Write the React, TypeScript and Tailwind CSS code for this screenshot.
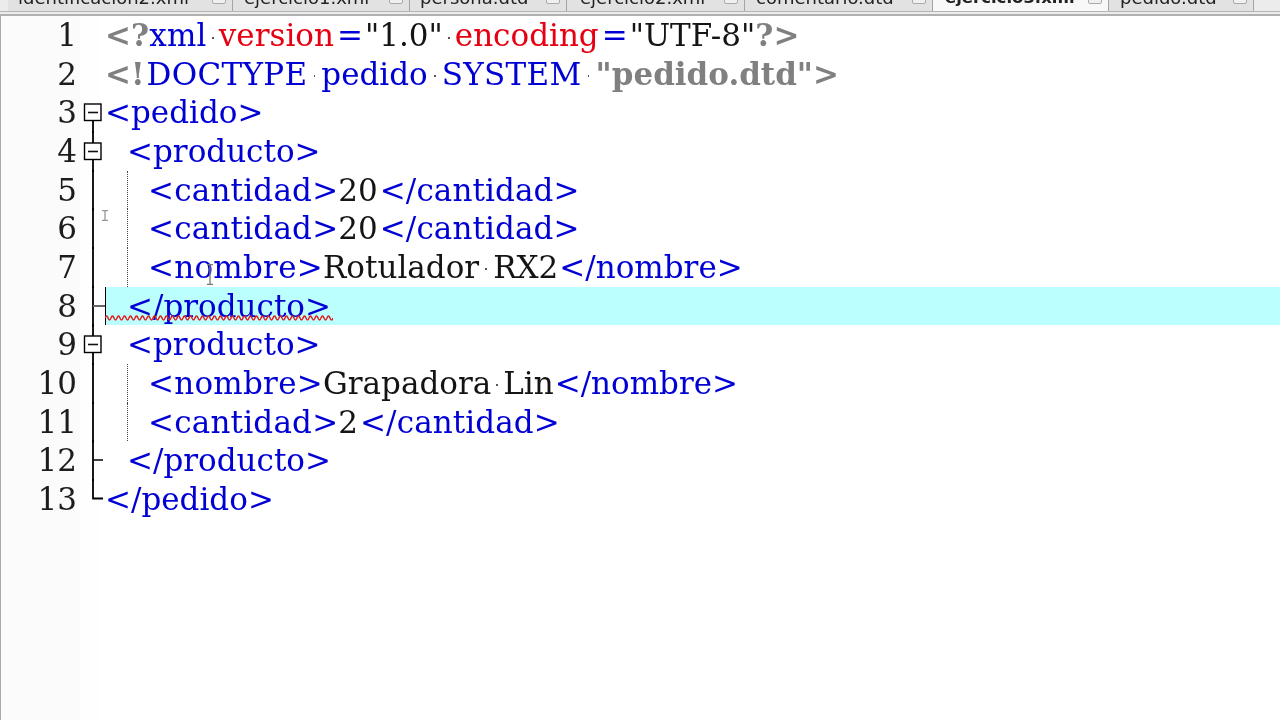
import type { ReactNode } from 'react';

const tabs = [
  { name: 'identificacion2.xml', w: 225, pl: 10 },
  { name: 'ejercicio1.xml', w: 177, pl: 11 },
  { name: 'persona.dtd', w: 157, pl: 10 },
  { name: 'ejercicio2.xml', w: 178, pl: 13 },
  { name: 'comentario.dtd', w: 188, pl: 11 },
  { name: 'ejercicio3.xml', w: 176, pl: 12, active: true },
  { name: 'pedido.dtd', w: 145, pl: 11 },
];

function Dot({ wide }: { wide?: boolean }) {
  return (
    <span className={`inline-block h-[2px] align-middle ${wide ? 'w-[14px]' : 'w-[12px]'}`}>
      <span className="mx-auto block h-[2px] w-[1.5px] bg-[#555]" />
    </span>
  );
}

type SegProps = { children: ReactNode; className?: string };

const B = ({ children, className = '' }: SegProps) => <span className={`text-[#0000d4] ${className}`}>{children}</span>;
const R = ({ children }: SegProps) => <span className="text-[#e60012]">{children}</span>;
const G = ({ children, className = '' }: SegProps) => <span className={`font-bold text-[#808080] ${className}`}>{children}</span>;
const K = ({ children, className = '' }: SegProps) => <span className={`text-[#141414] ${className}`}>{children}</span>;
const Eq = () => <span className="ml-[3px] mr-[2px] text-[#0000d4]">=</span>;

type Fold = 'none' | 'box-first' | 'box' | 'line' | 'tick' | 'tick-gray' | 'end';

function FoldMark({ type }: { type: Fold }) {
  if (type === 'none') return null;
  return (
    <svg width="20" height="39" viewBox="0 0 20 39" className="block overflow-visible">
      {type === 'end' ? (
        <path d="M8 -1V18.5H18" fill="none" stroke="#000" strokeWidth="1.8" />
      ) : (
        <path d={type === 'box-first' ? 'M8 19V40' : 'M8 -1V40'} stroke="#000" strokeWidth="1.8" />
      )}
      {type === 'tick' && <path d="M8 19H18" stroke="#111" strokeWidth="1.6" />}
      {type === 'tick-gray' && <path d="M8 19H20" stroke="#666" strokeWidth="2" />}
      {(type === 'box' || type === 'box-first') && (
        <g>
          <rect x="-0.5" y="11" width="16.5" height="16.5" fill="#fff" stroke="#000" strokeWidth="1.4" />
          <path d="M3 19.5H13" stroke="#111" strokeWidth="1.6" />
        </g>
      )}
    </svg>
  );
}

const cantidad = (n: string) => (
  <>
    <B className="tracking-[0.2px]">&lt;cantidad&gt;</B>
    <K>{n}</K>
    <B className="ml-[2px] tracking-[0.1px]">&lt;/cantidad&gt;</B>
  </>
);

const lines: { fold: Fold; indent: number; active?: boolean; code: ReactNode }[] = [
  {
    fold: 'none',
    indent: 0,
    code: (
      <>
        <G>&lt;?</G>
        <B className="tracking-[0.3px]">xml</B>
        <Dot />
        <R>version</R>
        <Eq />
        <K>"1.0"</K>
        <Dot />
        <R>encoding</R>
        <Eq />
        <K>"UTF-8"</K>
        <G>?&gt;</G>
      </>
    ),
  },
  {
    fold: 'none',
    indent: 0,
    code: (
      <>
        <G>&lt;!</G>
        <B className="ml-[2px] tracking-[0.3px]">DOCTYPE</B>
        <Dot wide />
        <B>pedido</B>
        <Dot wide />
        <B className="tracking-[0.3px]">SYSTEM</B>
        <Dot wide />
        <G>"pedido.dtd"</G>
        <G>&gt;</G>
      </>
    ),
  },
  { fold: 'box-first', indent: 0, code: <B>&lt;pedido&gt;</B> },
  { fold: 'box', indent: 1, code: <B>&lt;producto&gt;</B> },
  { fold: 'line', indent: 2, code: cantidad('20') },
  { fold: 'line', indent: 2, code: cantidad('20') },
  {
    fold: 'line',
    indent: 2,
    code: (
      <>
        <B className="tracking-[0.25px]">&lt;nombre&gt;</B>
        <K>Rotulador</K>
        <Dot wide />
        <K>RX2</K>
        <B className="ml-[1px]">&lt;/nombre&gt;</B>
      </>
    ),
  },
  { fold: 'tick-gray', indent: 1, active: true, code: <B>&lt;/producto&gt;</B> },
  { fold: 'box', indent: 1, code: <B>&lt;producto&gt;</B> },
  {
    fold: 'line',
    indent: 2,
    code: (
      <>
        <B className="tracking-[0.25px]">&lt;nombre&gt;</B>
        <K>Grapadora</K>
        <Dot />
        <K>Lin</K>
        <B className="ml-[1px]">&lt;/nombre&gt;</B>
      </>
    ),
  },
  { fold: 'line', indent: 2, code: cantidad('2') },
  { fold: 'tick', indent: 1, code: <B>&lt;/producto&gt;</B> },
  { fold: 'end', indent: 0, code: <B>&lt;/pedido&gt;</B> },
];

function IBeam({ h, color }: { h: number; color: string }) {
  return (
    <svg width="8" height={h} viewBox={`0 0 8 ${h}`} className="block">
      <path d={`M1 0.5H7M4 0.5V${h - 0.5}M1 ${h - 0.5}H7`} fill="none" stroke={color} strokeWidth="1.3" />
    </svg>
  );
}

export default function App() {
  return (
    <div className="relative flex h-[720px] w-[1280px] flex-col overflow-hidden bg-white font-['DejaVu_Serif',serif] blur-[0.35px]">
      {/* Tab bar, cut off by the crop */}
      <div className="h-[16px] shrink-0 border-b-2 border-[#b0b0b0] bg-[#ececec]">
        <div className="flex h-[12px] overflow-hidden border-b border-[#b4b4b4] pl-[8px]">
          {tabs.map((tab) => (
            <div
              key={tab.name}
              style={{ width: tab.w, paddingLeft: tab.pl }}
              className={`flex shrink-0 justify-between overflow-hidden border-r border-[#a4a4a4] pr-[6px] font-['DejaVu_Sans',sans-serif] leading-[20px] text-[#222] ${
                tab.active ? 'bg-[#f8f8f8] text-[16.5px] font-bold' : 'bg-[#e2e2e2] text-[18px]'
              }`}
            >
              <span className="-mt-[12px] whitespace-nowrap">{tab.name}</span>
              <span className="-mt-[6px] h-[10px] w-[14px] shrink-0 rounded-[2px] border border-[#aaa] bg-[#f0f0f0]" />
            </div>
          ))}
        </div>
      </div>

      {/* Editor */}
      <div className="flex flex-1 flex-col bg-[linear-gradient(to_right,#aaaaaa_1px,#fbfbfb_1px,#fbfbfb_80px,#fefefe_80px,#fefefe_100px,#ffffff_100px)]">
        {lines.map((line, i) => (
          <div
            key={i}
            className={`flex h-[38.67px] text-[31px] leading-[38px] whitespace-pre ${
              line.active ? 'bg-[linear-gradient(to_right,transparent_105px,#bcffff_105px)]' : ''
            }`}
          >
            <div className="w-[77px] shrink-0 text-right text-[#1c1c1c]">{i + 1}</div>
            <div className="w-[28px] shrink-0 pl-[8px]">
              <FoldMark type={line.fold} />
            </div>
            {line.indent === 2 ? (
              <div className="ml-[22px] h-full border-l border-dotted border-[#444] pl-[20px]">{line.code}</div>
            ) : (
              <div className={line.indent === 1 ? 'pl-[22px]' : ''}>{line.code}</div>
            )}
          </div>
        ))}
      </div>

      {/* Caret and squiggle on line 8 */}
      <div className="absolute left-[105px] top-[287px] h-[38px] w-[1px] bg-black" />
      <svg className="absolute left-[105px] top-[315px]" width="228" height="6" viewBox="0 0 228 6">
        <path
          d={'M0 3' + Array.from({ length: 76 }, (_, k) => `q1.5 ${k % 2 ? 4 : -4} 3 0`).join('')}
          fill="none"
          stroke="#e02020"
          strokeWidth="1.5"
        />
      </svg>

      {/* Mouse pointer traces */}
      <div className="absolute left-[101px] top-[210px]">
        <IBeam h={11} color="#999" />
      </div>
      <div className="absolute left-[206px] top-[264px]">
        <IBeam h={21} color="#777" />
      </div>
    </div>
  );
}
